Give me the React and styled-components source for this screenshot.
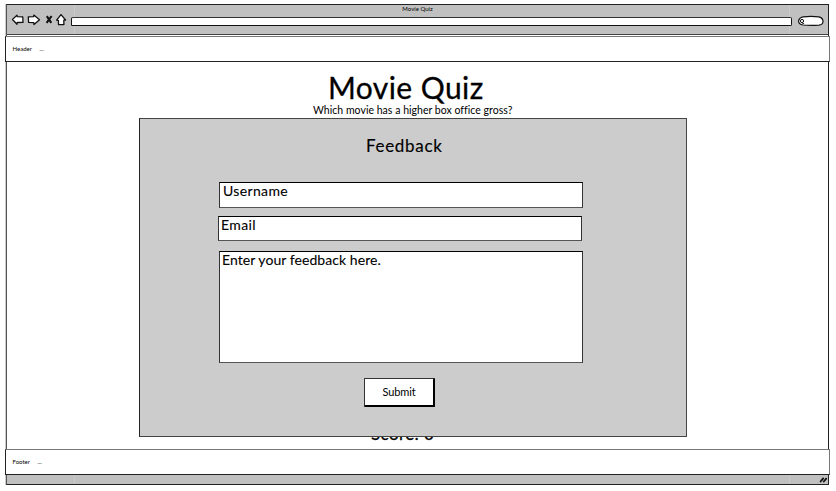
import React from "react";
import styled, { createGlobalStyle } from "styled-components";

const GlobalStyle = createGlobalStyle`
  *, *::before, *::after { box-sizing: border-box; }
  body {
    margin: 0;
    background: #fff;
    color: #000;
    font-family: Lato, "Open Sans", sans-serif;
    overflow: hidden;
  }
`;

const BrowserWindow = styled.div`
  display: flex;
  flex-direction: column;
  width: 823px;
  height: 481px;
  margin: 4px 0 0 6px;
  border: 1px solid #222;
  border-left-color: #555;
  box-shadow: -1px 0 0 #ccc;
`;

const seams = `linear-gradient(#cacaca, #cacaca) 67px 0 / 1px 100% no-repeat,
  linear-gradient(#cacaca, #cacaca) 782px 0 / 1px 100% no-repeat, #c0c0c0`;

const Chrome = styled.div`
  display: flex;
  flex-direction: column;
  flex: none;
  height: 30px;
  background: ${seams};
  border-bottom: 1px solid #444;
`;

const WindowTitle = styled.div`
  height: 8px;
  font-size: 6px;
  line-height: 8px;
  text-align: center;
`;

const Toolbar = styled.div`
  display: flex;
  align-items: flex-start;
  height: 17px;
  padding-left: 4px;
`;

const ToolIcons = styled.svg`
  flex: none;
  width: 56px;
  height: 16px;
  margin-right: 4px;
`;

const AddressBar = styled.div`
  width: 721px;
  height: 9px;
  margin-top: 4px;
  background: #fff;
  border: 1px solid #111;
  border-top-color: #333;
  border-radius: 2px 2px 2px 1px;
`;

const SearchIcon = styled.svg`
  flex: none;
  width: 28px;
  height: 12px;
  margin: 2px 0 0 5px;
`;

const Strip = styled.div`
  display: flex;
  flex: none;
  gap: 8px;
  height: 26px;
  margin: ${(p) => (p.$bottom ? "0" : "1px")} -2px 0;
  padding: 8px 0 0 6.5px;
  background: #fff;
  border: 1px solid #222;
  border-top-color: #777;
  border-right-color: #777;
  font-size: 6px;
  line-height: 8px;
`;

const StripLabel = styled.span`
  width: ${(p) => p.$width}px;
`;

const Page = styled.main`
  display: flex;
  flex-direction: column;
  flex: 1;
  min-height: 0;
`;

const Title = styled.h1`
  margin: 7px 0 0 321px;
  font-size: 30px;
  font-weight: 400;
  line-height: 36px;
  letter-spacing: 0.42px;
  -webkit-text-stroke: 0.3px #000;
`;

const Question = styled.p`
  margin: -1px 0 0 306px;
  font-size: 10.5px;
  font-variant-ligatures: none;
  line-height: 12px;
  letter-spacing: 0.03px;
`;

const Panel = styled.form`
  position: relative;
  z-index: 1;
  display: flex;
  flex-direction: column;
  flex: none;
  width: 548px;
  height: 319px;
  margin: 2px 0 0 132px;
  padding: 16px 0 0 79px;
  background: #ccc;
  border: 1px solid #444;
  border-left-color: #222;
`;

const PanelTitle = styled.h2`
  margin: 1px 0 26px 147px;
  font-size: 17px;
  font-weight: 400;
  line-height: 20px;
  letter-spacing: 0.68px;
  -webkit-text-stroke: 0.15px #000;
`;

const Field = styled.div`
  width: 364px;
  height: ${(p) => p.$height}px;
  margin: 0 0 ${(p) => p.$gap}px ${(p) => p.$shift || 0}px;
  padding-left: ${(p) => p.$inset || 2}px;
  background: #fff;
  border: 1px solid #333;
  border-top-color: #000;
  border-bottom-color: #555;
  font-size: 14px;
  line-height: 16px;
  letter-spacing: ${(p) => p.$tracking}px;
  -webkit-text-stroke: 0.1px #000;
`;

const SubmitButton = styled.button`
  width: 71px;
  height: 29px;
  margin-left: 145px;
  padding: 0;
  background: #fff;
  border: 1px solid #333;
  border-right: 2px solid #000;
  border-bottom: 2px solid #000;
  border-radius: 1px;
  color: #000;
  font: 11px/26px Lato, sans-serif;
  letter-spacing: -0.1px;
`;

const Score = styled.p`
  margin: -13px 0 0 364px;
  font-size: 17px;
  line-height: 20px;
  letter-spacing: 0.4px;
  -webkit-text-stroke: 0.3px #000;
`;

const StatusBar = styled.div`
  display: flex;
  justify-content: flex-end;
  flex: none;
  height: 9px;
  background: ${seams};
`;

const Grip = styled.svg`
  width: 9px;
  height: 9px;
`;

export default function App() {
  return (
    <>
      <GlobalStyle />
      <BrowserWindow>
        <Chrome>
          <WindowTitle>Movie Quiz</WindowTitle>
          <Toolbar>
            <ToolIcons viewBox="0 0 56 16" fill="#fff" stroke="#111" strokeWidth="1.3" strokeLinejoin="round">
              <path d="M1.5 6.5 L6 2.1 L6.2 3.7 L11.8 3.9 L12 9.4 L6.2 9.5 L6 11.3 Z" />
              <path d="M17.3 3.9 L22.6 3.7 L22.8 2.1 L28.5 6.7 L23 11.5 L22.8 9.6 L17.6 9.4 Z" />
              <path d="M35.8 3.2 L40.3 9.8 M40.6 3 L35.6 9.8" fill="none" strokeWidth="2.1" />
              <path d="M50 1.6 L54.6 7 L52.8 7.2 L52.9 11.6 L47.5 11.7 L47.4 7.3 L45.6 7.2 Z" />
            </ToolIcons>
            <AddressBar />
            <SearchIcon viewBox="0 0 28 12" fill="#fff" stroke="#111" strokeWidth="1.2">
              <path d="M6 1.8 Q14 0.9 22 1.8 Q26.3 3 26 7 Q25.5 9.9 22 10.2 Q12 10.7 6 10 Q1.5 9.2 1.6 6 Q2 2.7 6 1.8 Z" />
              <circle cx="5" cy="6" r="1.6" strokeWidth="1" />
              <path d="M5 7.8 L7.2 9" strokeWidth="1" />
            </SearchIcon>
          </Toolbar>
        </Chrome>
        <Strip>
          <StripLabel $width={19}>Header</StripLabel>
          <span>...</span>
        </Strip>
        <Page>
          <Title>Movie Quiz</Title>
          <Question>Which movie has a higher box office gross?</Question>
          <Panel>
            <PanelTitle>Feedback</PanelTitle>
            <Field $height={26} $gap={8} $inset={3} $tracking={0.36}>Username</Field>
            <Field $height={25} $gap={10} $shift={-1} $tracking={0.4}>Email</Field>
            <Field $height={112} $gap={15} $tracking={0.06}>Enter your feedback here.</Field>
            <SubmitButton type="button">Submit</SubmitButton>
          </Panel>
          <Score>Score: 0</Score>
        </Page>
        <Strip $bottom>
          <StripLabel $width={17}>Footer</StripLabel>
          <span>...</span>
        </Strip>
        <StatusBar>
          <Grip viewBox="0 0 9 9" stroke="#111" strokeWidth="1.8" strokeLinecap="round">
            <path d="M1.6 6.5 L4.2 3.4 M4.8 6.5 L7.2 3.6" />
          </Grip>
        </StatusBar>
      </BrowserWindow>
    </>
  );
}
